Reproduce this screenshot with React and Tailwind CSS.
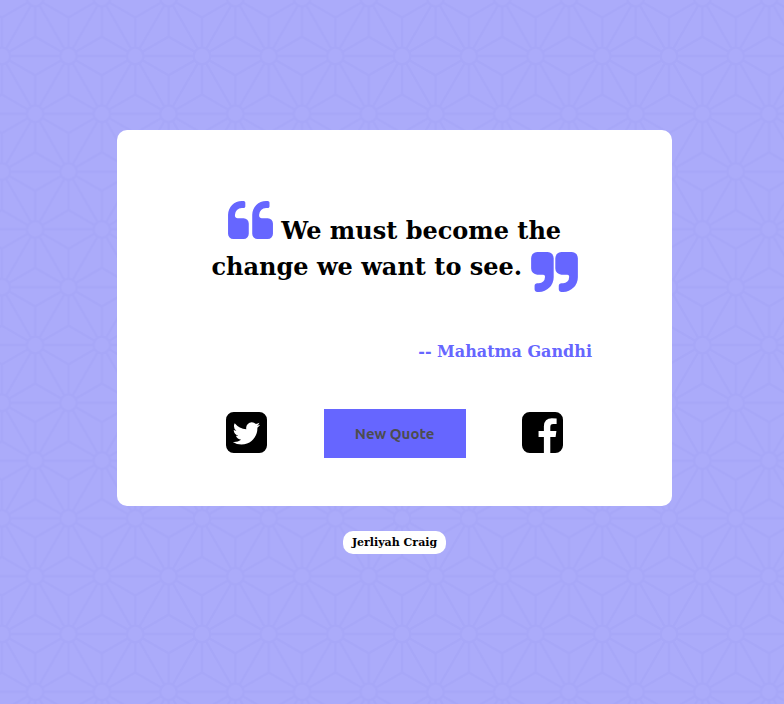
const QUOTE = { text: 'We must become the change we want to see.', author: 'Mahatma Gandhi' };

function StarPattern() {
  return (
    <svg className="absolute inset-0 h-full w-full" aria-hidden="true">
      <defs>
        <pattern id="stars" width="66.72" height="115.6" x="1.8" y="-1.8" patternUnits="userSpaceOnUse">
          <g fill="none" stroke="#a7a7f8" strokeWidth="2.4">
            <path d="M0 57.8H66.72M0 0H66.72M0 115.6H66.72" />
            <path d="M0 57.8L33.36 0L66.72 57.8L33.36 115.6Z" />
            <path d="M33.36 0V38.5M33.36 38.5L0 57.8M33.36 38.5L66.72 57.8" />
            <path d="M33.36 115.6V77.1M33.36 77.1L0 57.8M33.36 77.1L66.72 57.8" />
            <path d="M0 57.8V19.3M0 19.3L33.36 0M66.72 57.8V19.3M66.72 19.3L33.36 0" />
            <path d="M0 57.8V96.3M0 96.3L33.36 115.6M66.72 57.8V96.3M66.72 96.3L33.36 115.6" />
          </g>
          <g fill="#ababfa" stroke="#a7a7f8" strokeWidth="2.4">
            <circle cx="0" cy="57.8" r="8.4" />
            <circle cx="66.72" cy="57.8" r="8.4" />
            <circle cx="33.36" cy="0" r="8.4" />
            <circle cx="33.36" cy="115.6" r="8.4" />
          </g>
        </pattern>
      </defs>
      <rect width="100%" height="100%" fill="url(#stars)" />
    </svg>
  );
}

function QuoteLeft() {
  return (
    <svg viewBox="64 128 1664 1408" className="inline h-[38px] w-[45px] align-baseline text-[#6666ff]" fill="currentColor" aria-hidden="true">
      <path d="M832 960v384q0 80-56 136t-136 56h-384q-80 0-136-56t-56-136v-704q0-104 40.5-198.5t109.5-163.5 163.5-109.5 198.5-40.5h64q26 0 45 19t19 45v128q0 26-19 45t-45 19h-64q-106 0-181 75t-75 181v32q0 40 28 68t68 28h224q80 0 136 56t56 136zm896 0v384q0 80-56 136t-136 56h-384q-80 0-136-56t-56-136v-704q0-104 40.5-198.5t109.5-163.5 163.5-109.5 198.5-40.5h64q26 0 45 19t19 45v128q0 26-19 45t-45 19h-64q-106 0-181 75t-75 181v32q0 40 28 68t68 28h224q80 0 136 56t56 136z" />
    </svg>
  );
}

function QuoteRight() {
  return (
    <svg viewBox="27 91 1738 1482" className="inline h-[40px] w-[47px] align-[-17px] text-[#6666ff]" fill="currentColor" stroke="currentColor" strokeWidth="68" strokeLinejoin="round" aria-hidden="true">
      <path d="M832 320v704q0 104-40.5 198.5t-109.5 163.5-163.5 109.5-198.5 40.5h-64q-26 0-45-19t-19-45v-128q0-26 19-45t45-19h64q106 0 181-75t75-181v-32q0-40-28-68t-68-28h-224q-80 0-136-56t-56-136v-384q0-80 56-136t136-56h384q80 0 136 56t56 136zm896 0v704q0 104-40.5 198.5t-109.5 163.5-163.5 109.5-198.5 40.5h-64q-26 0-45-19t-19-45v-128q0-26 19-45t45-19h64q106 0 181-75t75-181v-32q0-40-28-68t-68-28h-224q-80 0-136-56t-56-136v-384q0-80 56-136t136-56h384q80 0 136 56t56 136z" />
    </svg>
  );
}

function SocialLink({ label, path }) {
  return (
    <a href="#share" aria-label={label} className="pt-[3px] text-black">
      <svg viewBox="128 128 1536 1536" className="h-[41px] w-[41px]" fill="currentColor" aria-hidden="true">
        <path d={path} />
      </svg>
    </a>
  );
}

const TWITTER =
  'M1408 610q-56 25-121 34 68-40 93-117-65 38-134 51-61-66-153-66-87 0-148.5 61.5t-61.5 148.5q0 29 5 48-129-7-242-65t-192-155q-29 50-29 106 0 114 91 175-47-1-100-26v2q0 75 50 133.5t123 72.5q-29 8-51 8-13 0-39-4 21 63 74.5 104t121.5 42q-116 90-261 90-26 0-50-3 148 94 322 94 112 0 210-35.5t168-95 120.5-137 75-162 24.5-168.5q0-18-1-27 63-45 105-109zm256-194v960q0 119-84.5 203.5t-203.5 84.5h-960q-119 0-203.5-84.5t-84.5-203.5v-960q0-119 84.5-203.5t203.5-84.5h960q119 0 203.5 84.5t84.5 203.5z';
const FACEBOOK =
  'M1376 128q119 0 203.5 84.5t84.5 203.5v960q0 119-84.5 203.5t-203.5 84.5h-188v-595h199l30-232h-229v-148q0-56 23.5-84t91.5-28l122-1v-207q-63-9-178-9-136 0-217.5 80t-81.5 226v171h-200v232h200v595h-532q-119 0-203.5-84.5t-84.5-203.5v-960q0-119 84.5-203.5t203.5-84.5h960z';

export default function App() {
  return (
    <div className="relative min-h-screen bg-[#ababfa] font-['DejaVu_Serif',serif] font-bold text-black">
      <StarPattern />
      <main className="relative flex min-h-screen flex-col items-center pt-[130px] pb-10 pl-[5px]">
        <section className="w-full max-w-[555px] rounded-[10px] bg-white pt-[71px] pb-12">
          <blockquote className="px-20">
            <p className="text-center text-2xl leading-9">
              <QuoteLeft /> {QUOTE.text} <QuoteRight />
            </p>
            <footer className="mt-12 text-right text-base leading-6 text-[#6666ff]">-- {QUOTE.author}</footer>
          </blockquote>
          <div className="mt-[45px] flex items-start justify-between px-[109px]">
            <SocialLink label="Share on Twitter" path={TWITTER} />
            <button type="button" className="h-[49px] w-[142px] bg-[#6666ff] pt-0.5 font-['Ubuntu','Noto_Sans',sans-serif] text-[15px] text-[#4d4d4d]">
              New Quote
            </button>
            <SocialLink label="Share on Facebook" path={FACEBOOK} />
          </div>
        </section>
        <p className="mt-[25px] rounded-[10px] bg-white px-[9px] text-[11px] leading-[23px]">Jerliyah Craig</p>
      </main>
    </div>
  );
}
